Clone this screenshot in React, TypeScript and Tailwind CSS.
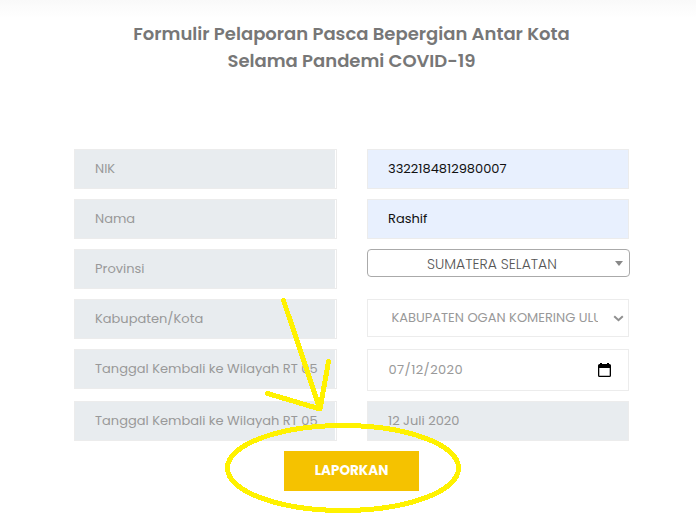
import { ReactNode } from "react";

function Label({ children }: { children: ReactNode }) {
  return (
    <div className="flex h-10 w-[263px] border border-[#ececec] bg-white pr-px">
      <div className="flex flex-1 items-center bg-[#e8ecef] pl-5">
        <span className="whitespace-nowrap">{children}</span>
      </div>
    </div>
  );
}

function Field({ children, className }: { children: ReactNode; className: string }) {
  return (
    <div className={`flex w-[262px] items-center border border-[#ececec] ${className}`}>
      {children}
    </div>
  );
}

function Row({ children, className = "" }: { children: ReactNode; className?: string }) {
  return <div className={`flex items-start gap-[30px] ${className}`}>{children}</div>;
}

export default function App() {
  return (
    <main className="relative h-[519px] w-[696px] overflow-hidden bg-white bg-[linear-gradient(#f9f9f9,#ffffff_18px)] pt-5 font-[Poppins,Inter,sans-serif] text-[13px] text-[#999999]">
      <h1 className="ml-[7px] h-[129px] text-center text-[18px] leading-[27px] font-semibold text-[#777777]">
        Formulir Pelaporan Pasca Bepergian Antar Kota
        <br />
        Selama Pandemi COVID-19
      </h1>
      <form className="ml-[74px] flex flex-col">
        <Row className="h-[50px]">
          <Label>NIK</Label>
          <Field className="h-10 bg-[#e8f0fe] pl-5 text-[#111111]">3322184812980007</Field>
        </Row>
        <Row className="h-[50px]">
          <Label>Nama</Label>
          <Field className="h-10 bg-[#e8f0fe] pl-5 text-[#111111]">Rashif</Field>
        </Row>
        <Row className="h-[50px]">
          <Label>Provinsi</Label>
          <div className="flex h-7 w-[263px] items-center rounded-[4px] border border-[#aaaaaa] pt-[2px] pr-[6px] pl-[59px] text-[14px] font-light text-[#555555]">
            <span className="flex-1 whitespace-nowrap">SUMATERA SELATAN</span>
            <svg className="-mt-[2px] h-[5px] w-[8px]" viewBox="0 0 8 5" fill="#888888">
              <path d="M0 0h8L4 5z" />
            </svg>
          </div>
        </Row>
        <Row className="h-[50px]">
          <Label>Kabupaten/Kota</Label>
          <Field className="h-[38px] bg-white pr-1 pl-[23.5px]">
            <span className="w-[206px] overflow-hidden whitespace-nowrap">
              KABUPATEN OGAN KOMERING ULU
            </span>
            <svg className="ml-auto h-[7px] w-[11px]" viewBox="0 0 11 7" fill="none" stroke="#909090" strokeWidth="2">
              <path d="M1.2 1.2L5.5 5.2L9.8 1.2" />
            </svg>
          </Field>
        </Row>
        <Row className="h-[52px]">
          <Label>Tanggal Kembali ke Wilayah RT 05</Label>
          <Field className="h-[42px] bg-white pr-[17px] pl-[20.5px]">
            <span className="tracking-[0.4px]">07/12/2020</span>
            <svg className="ml-auto h-[14px] w-[13px]" viewBox="0 0 13 14" fill="black">
              <path fillRule="evenodd" d="M1.5 1H2V0H4V1H9V0H11V1H11.5Q13 1 13 2.5V12.5Q13 14 11.5 14H1.5Q0 14 0 12.5V2.5Q0 1 1.5 1ZM1.3 5V12.7H11.7V5Z" />
            </svg>
          </Field>
        </Row>
        <Row className="h-[50px]">
          <Label>Tanggal Kembali ke Wilayah RT 05</Label>
          <Field className="h-10 bg-[#e8ecef] pl-5">12 Juli 2020</Field>
        </Row>
        <button type="button" className="ml-[210px] h-10 w-[135px] bg-[#f5c200] text-[13.5px] font-bold text-white">
          LAPORKAN
        </button>
      </form>
      <svg
        className="pointer-events-none absolute inset-0 h-[519px] w-[696px]"
        viewBox="0 0 696 519"
        fill="none"
        stroke="#fff200"
        strokeWidth="5"
        strokeLinecap="round"
        strokeLinejoin="round"
        shapeRendering="crispEdges"
      >
        <path d="M283.5 300.5L320 409L328.5 361.5M267.5 393.5L320 409" />
        <ellipse cx="343" cy="468" rx="115.5" ry="42.5" />
      </svg>
    </main>
  );
}
